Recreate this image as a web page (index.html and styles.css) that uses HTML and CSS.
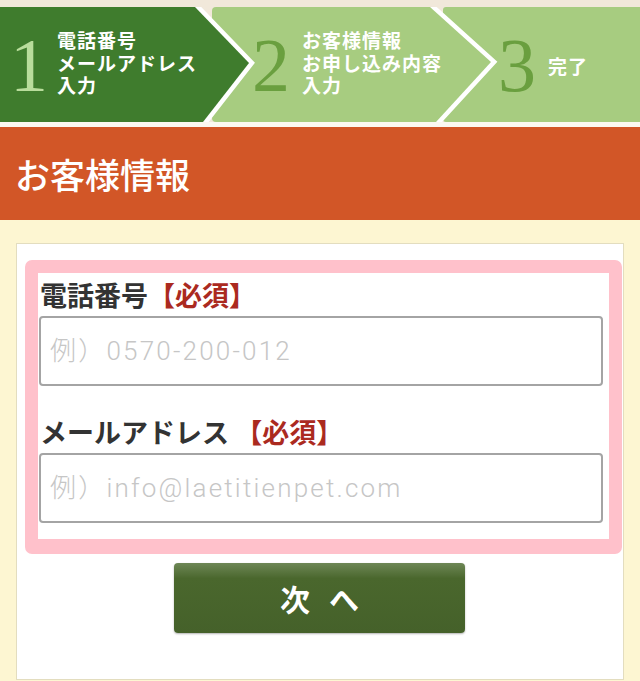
FILE: index.html
```html
<!DOCTYPE html>
<html lang="ja">
<head>
    <meta charset="UTF-8">
    <meta name="viewport" content="width=device-width, initial-scale=1.0">
    <title>お客様情報</title>
    <link rel="stylesheet" href="styles.css">
</head>
<body>
    <!-- step indicator -->
    <svg class="steps" width="640" height="127" viewBox="0 0 640 127">
        <defs>
            <clipPath id="bar"><rect x="0" y="7" width="640" height="115"/></clipPath>
        </defs>
        <rect width="640" height="127" fill="#f1e8da"/>
        <rect y="122" width="640" height="5" fill="#fbf8f1"/>
        <g clip-path="url(#bar)">
            <rect x="443" y="7" width="210" height="115" rx="3" fill="#a7cc80"/>
            <polyline points="430,7 491,62 436,122" fill="none" stroke="#fff" stroke-width="9"/>
            <path d="M216,7 H430 L491,62 L436,122 H216 Q212,122 212,118 V11 Q212,7 216,7 Z" fill="#a7cc80"/>
            <polyline points="195,7 249,63 203,122" fill="none" stroke="#fff" stroke-width="9"/>
            <path d="M0,7 H195 L249,63 L203,122 H0 Z" fill="#3f7c2d"/>
        </g>
        <text class="step-num num-on" x="29" y="91">1</text>
        <text class="step-label" x="57" y="48">電話番号</text>
        <text class="step-label" x="57" y="71">メールアドレス</text>
        <text class="step-label" x="57" y="93">入力</text>

        <text class="step-num" x="271" y="91">2</text>
        <text class="step-label" x="302" y="48">お客様情報</text>
        <text class="step-label" x="302" y="71">お申し込み内容</text>
        <text class="step-label" x="302" y="93">入力</text>

        <text class="step-num" x="517" y="91">3</text>
        <text class="step-label" x="548" y="74">完了</text>
    </svg>

    <h1 class="page-title">お客様情報</h1>

    <form class="panel">
        <div class="fields">
            <div class="field">
                <label for="tel">電話番号<span class="req">【必須】</span></label>
                <input type="tel" id="tel" name="tel" placeholder="例）0570-200-012">
            </div>
            <div class="field">
                <label for="mail">メールアドレス <span class="req">【必須】</span></label>
                <input type="email" id="mail" name="mail" placeholder="例）info@laetitienpet.com">
            </div>
        </div>
        <button type="submit" class="next-btn">次 へ</button>
    </form>
</body>
</html>
```

FILE: styles.css
```css
body {
    margin: 0;
    background-color: #fdf6d2;
    font-family: "Noto Sans CJK JP", "Noto Sans", sans-serif;
    color: #333;
}
.steps {
    display: block;
}
.step-num {
    font-family: "Liberation Serif", serif;
    font-size: 76px;
    fill: #6a9f3f;
    text-anchor: middle;
}
.step-num.num-on {
    fill: #b9dd9c;
}
.step-label {
    font-family: "Noto Sans CJK JP", sans-serif;
    font-size: 19px;
    font-weight: bold;
    letter-spacing: 1px;
    fill: #fff;
}
.page-title {
    margin: 0;
    height: 93px;
    line-height: 93px;
    padding-left: 15px;
    background-color: #d25627;
    color: #fff;
    font-size: 35px;
    font-weight: 500;
}
.panel {
    margin: 23px 16px 0;
    padding: 16px 1px 46px 8px;
    background-color: #fff;
    border: 1px solid #e3ddbf;
}
.fields {
    border: 13px solid #ffc1cb;
    border-bottom-width: 15px;
    border-radius: 7px;
    padding: 0 6px 16px 1px;
}
.field + .field {
    margin-top: 24px;
}
label {
    display: block;
    padding-left: 1px;
    font-size: 27px;
    font-weight: bold;
    line-height: 43px;
    color: #333;
}
.req {
    color: #ab2a1f;
}
input {
    display: block;
    box-sizing: border-box;
    width: 100%;
    height: 70px;
    margin: 0;
    padding: 0 9px;
    border: 2px solid #a4a4a4;
    border-radius: 4px;
    background: #fff;
    font-family: Roboto, "Noto Sans CJK JP", sans-serif;
    font-size: 26px;
    font-weight: 300;
    letter-spacing: 2.2px;
    color: #333;
    outline: none;
}
input::placeholder {
    color: #c6c6c6;
}
.next-btn {
    display: block;
    width: 291px;
    height: 70px;
    margin: 9px 0 0 149px;
    padding: 0 0 0 6px;
    border: none;
    border-radius: 4px;
    background: linear-gradient(#6e8756 0%, #4a672d 22%, #45612a 100%);
    box-shadow: 0 1px 2px rgba(0,0,0,0.3);
    color: #fff;
    font-family: "Noto Sans CJK JP", sans-serif;
    font-size: 30px;
    font-weight: bold;
    letter-spacing: 6px;
    cursor: pointer;
}
```
